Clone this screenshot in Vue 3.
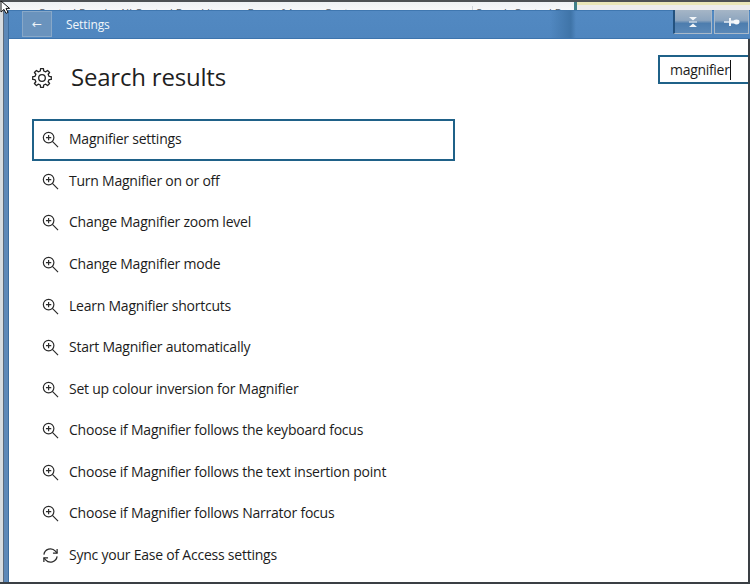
<script setup>
const rows = [
  'Magnifier settings',
  'Turn Magnifier on or off',
  'Change Magnifier zoom level',
  'Change Magnifier mode',
  'Learn Magnifier shortcuts',
  'Start Magnifier automatically',
  'Set up colour inversion for Magnifier',
  'Choose if Magnifier follows the keyboard focus',
  'Choose if Magnifier follows the text insertion point',
  'Choose if Magnifier follows Narrator focus',
]

function gearPath(cx, cy, teeth, rOut, rIn) {
  const pts = []
  const step = (Math.PI * 2) / teeth
  for (let i = 0; i < teeth; i++) {
    const a = i * step - Math.PI / 2
    const w = step * 0.2
    const w2 = step * 0.3
    pts.push([a - w2, rIn], [a - w, rOut], [a + w, rOut], [a + w2, rIn])
  }
  return (
    pts
      .map(([a, r], i) => `${i ? 'L' : 'M'}${(cx + r * Math.cos(a)).toFixed(2)} ${(cy + r * Math.sin(a)).toFixed(2)}`)
      .join(' ') + ' Z'
  )
}
const gear = gearPath(10, 10, 8, 9.4, 7.2)
</script>

<template>
  <div class="screen">
    <div class="behind">
      <span class="crumb">Control Panel &gt; All Control Panel Items &gt; Ease of Access Center</span>
      <span class="behind-search">Search Control Panel</span>
      <span class="divider"></span>
      <span class="note"></span>
    </div>
    <div class="window">
      <div class="edge"></div>
      <div class="frame">
        <header class="titlebar">
          <button class="back">←</button>
          <span class="title">Settings</span>
          <div class="shade"></div>
          <div class="tool-btn first">
            <svg width="14" height="14" viewBox="0 0 14 14">
              <path d="M3 2h8L7 5.5z M3 12h8L7 8.5z" fill="#f2f5f8" />
              <path d="M3 7h8" stroke="#f2f5f8" stroke-width="1" />
            </svg>
          </div>
          <div class="tool-btn">
            <svg width="18" height="12" viewBox="0 0 18 12">
              <path d="M1 6h5" stroke="#eef2f6" stroke-width="1.4" />
              <path d="M6 2h2v8H6z" fill="#eef2f6" />
              <path d="M8 4.5h3v3H8z" fill="#eef2f6" />
              <ellipse cx="13.5" cy="6" rx="3" ry="2.4" fill="#f6f8fa" />
            </svg>
          </div>
        </header>
        <main class="content">
          <div class="head">
            <svg class="gear" width="20" height="20" viewBox="0 0 20 20" fill="none" stroke="#222" stroke-width="1.3">
              <path :d="gear" stroke-linejoin="round" />
              <circle cx="10" cy="10" r="3.3" />
            </svg>
            <h1>Search results</h1>
            <div class="search">magnifier<i class="caret"></i></div>
          </div>
          <ul class="list">
            <li v-for="(r, i) in rows" :key="r" class="row" :class="{ focus: i === 0 }">
              <svg class="ico" width="17" height="17" viewBox="0 0 18 18" fill="none" stroke="#2a2a2a" stroke-width="1.25">
                <circle cx="7" cy="7" r="5.6" />
                <path d="M7 4.2v5.6M4.2 7h5.6M11 11l6 6" />
              </svg>
              <span class="label">{{ r }}</span>
            </li>
            <li class="row">
              <svg class="ico" width="17" height="17" viewBox="0 0 18 18" fill="none" stroke="#2a2a2a" stroke-width="1.3">
                <path d="M2 8a7 7 0 0 1 12.2-3.6L16 6.5" />
                <path d="M16 2v4.6h-4.4" />
                <path d="M16 10a7 7 0 0 1-12.2 3.6L2 11.5" />
                <path d="M2 16v-4.6h4.4" />
              </svg>
              <span class="label">Sync your Ease of Access settings</span>
            </li>
          </ul>
        </main>
      </div>
    </div>
    <svg class="cursor" width="10" height="14" viewBox="0 0 10 14">
      <path d="M1 0v11l3-2.6 2 4 2-1-2-4h3.6z" fill="#fff" stroke="#111" stroke-width="1" />
    </svg>
  </div>
</template>

<style scoped>
.screen {
  position: relative;
  width: 750px;
  height: 584px;
  overflow: hidden;
  display: flex;
  flex-direction: column;
  background: #fff;
  font-family: "Open Sans", "Noto Sans", sans-serif;
  color: #1c1c1c;
}
.behind {
  height: 10px;
  flex: none;
  display: flex;
  align-items: flex-start;
  overflow: hidden;
  background: linear-gradient(#eef1f4, #f6f7f9);
  border-top: 2px solid #4c5054;
  box-sizing: border-box;
  padding-left: 38px;
  font-size: 11px;
  line-height: 14px;
  color: #5a5f66;
}
.crumb {
  width: 434px;
  height: 4px;
  overflow: hidden;
  white-space: nowrap;
  margin-top: 4px;
}
.behind-search {
  width: 98px;
  height: 4px;
  margin-top: 4px;
  white-space: nowrap;
  overflow: hidden;
  border-left: 1px solid #cfd4d9;
  padding-left: 3px;
}
.divider {
  width: 3px;
  height: 8px;
  background: #3f7f88;
  flex: none;
}
.note {
  flex: 1;
  height: 8px;
  background: linear-gradient(#e9e6b8 0 3px, #ececec 3px);
}
.window {
  flex: 1;
  display: flex;
  min-height: 0;
  border-bottom: 2px solid #3a3f44;
}
.edge {
  width: 9px;
  flex: none;
  background: linear-gradient(90deg, #d8dce0 0 3px, #5b6a7c 3px 4px, #5d88b8 4px 8px, #3d6d9f 8px 9px);
}
.frame {
  flex: 1;
  display: flex;
  flex-direction: column;
  min-width: 0;
}
.titlebar {
  position: relative;
  height: 29px;
  flex: none;
  display: flex;
  align-items: flex-start;
  background: linear-gradient(#3f77b0 0 1px, #5289c2 1px, #4f86bf);
  border-bottom: 1px solid #3d74ad;
  box-sizing: border-box;
  color: #f2f6fa;
}
.back {
  width: 30px;
  height: 26px;
  margin: 1px 0 0 13px;
  padding: 0;
  background: #6a93bd;
  border: 1px solid #88a8c8;
  color: #eef3f8;
  font-family: "DejaVu Sans", sans-serif;
  font-size: 12px;
  line-height: 22px;
}
.title {
  margin: 6px 0 0 14px;
  font-size: 12px;
  line-height: 17px;
  letter-spacing: -0.1px;
  width: 484px;
  flex: none;
}
.shade {
  width: 26px;
  height: 28px;
  flex: none;
  background: linear-gradient(90deg, rgba(63, 116, 168, 0), #3f74a8 80%, rgba(63, 116, 168, 0));
  margin-right: 97px;
}
.tool-btn {
  width: 35px;
  height: 24px;
  flex: none;
  margin-left: 2px;
  display: flex;
  align-items: center;
  justify-content: center;
  background: linear-gradient(#a5b5c6, #8ea6bf 45%, #4d7dae 58%, #5a88b7);
  border: 1px solid #a9b9c9;
  border-top: none;
  box-sizing: border-box;
}
.tool-btn.first {
  width: 39px;
  margin-left: 0;
  border-left: 2px solid #23527f;
}
.content {
  flex: 1;
  min-height: 0;
  border-right: 2px solid #3a3f44;
  background: #fff;
  padding-left: 23px;
}
.head {
  display: flex;
  align-items: flex-start;
  height: 80px;
}
.gear {
  margin: 29px 0 0 0;
  flex: none;
}
h1 {
  margin: 20px 0 0 19px;
  width: 587px;
  flex: none;
  font-size: 24px;
  font-weight: 400;
  line-height: 36px;
  letter-spacing: -0.2px;
  color: #1f1f1f;
}
.search {
  margin-top: 16px;
  flex: 1;
  height: 29px;
  box-sizing: border-box;
  border: 2px solid #1f6188;
  border-right: none;
  padding-left: 10px;
  font-size: 14px;
  letter-spacing: -0.3px;
  line-height: 26px;
  white-space: nowrap;
  display: flex;
}
.caret {
  width: 1px;
  height: 20px;
  margin-top: 3px;
  background: #111;
}
.list {
  list-style: none;
  margin: 0;
  padding: 0;
  width: 423px;
}
.row {
  height: 41.58px;
  display: flex;
  align-items: center;
  box-sizing: border-box;
  padding-left: 10px;
  font-size: 14px;
  letter-spacing: -0.23px;
  white-space: nowrap;
}
.label {
  margin-top: -2px;
}
.row.focus {
  box-shadow: inset 0 0 0 2px #1f6188;
}
.ico {
  flex: none;
  margin-right: 10px;
}
.cursor {
  position: absolute;
  left: 0;
  top: 1px;
}
</style>
